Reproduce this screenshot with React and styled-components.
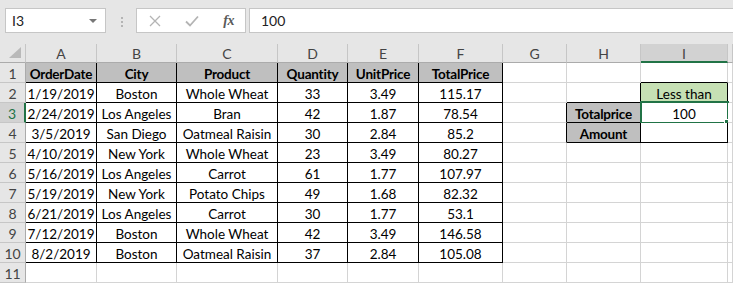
import React from "react";
import styled, { createGlobalStyle } from "styled-components";

const GlobalStyle = createGlobalStyle`
  html, body {
    margin: 0;
    padding: 0;
    background: #fff;
    overflow: hidden;
  }
  body {
    font-family: Lato, "Open Sans", sans-serif;
    color: #000;
  }
`;

const COLS = [71, 80, 101, 70, 71, 84, 64, 74, 87];
const LETTERS = ["A", "B", "C", "D", "E", "F", "G", "H", "I"];
const GRID = "#d4d4d4";
const GREEN = "#217346";

const table = [
  ["OrderDate", "City", "Product", "Quantity", "UnitPrice", "TotalPrice"],
  ["1/19/2019", "Boston", "Whole Wheat", "33", "3.49", "115.17"],
  ["2/24/2019", "Los Angeles", "Bran", "42", "1.87", "78.54"],
  ["3/5/2019", "San Diego", "Oatmeal Raisin", "30", "2.84", "85.2"],
  ["4/10/2019", "New York", "Whole Wheat", "23", "3.49", "80.27"],
  ["5/16/2019", "Los Angeles", "Carrot", "61", "1.77", "107.97"],
  ["5/19/2019", "New York", "Potato Chips", "49", "1.68", "82.32"],
  ["6/21/2019", "Los Angeles", "Carrot", "30", "1.77", "53.1"],
  ["7/12/2019", "Boston", "Whole Wheat", "42", "3.49", "146.58"],
  ["8/2/2019", "Boston", "Oatmeal Raisin", "37", "2.84", "105.08"],
];

// sheet[row][col], row 1..11, col 0..9 (9 = partial column J)
const buildSheet = () => {
  const sheet = [];
  for (let r = 1; r <= 11; r++) {
    const row = [];
    for (let c = 0; c < 10; c++) row.push({ text: "", boxed: false });
    sheet.push(row);
  }
  table.forEach((cells, i) => {
    cells.forEach((text, c) => {
      sheet[i][c] = { text, boxed: true, bold: i === 0, fill: i === 0 ? "#bfbfbf" : null };
    });
  });
  sheet[1][8] = { text: "Less than", boxed: true, fill: "#c6e0b4" };
  sheet[2][7] = { text: "Totalprice", boxed: true, bold: true, fill: "#bfbfbf" };
  sheet[2][8] = { text: "100", boxed: true, selected: true };
  sheet[3][7] = { text: "Amount", boxed: true, bold: true, fill: "#bfbfbf" };
  sheet[3][8] = { text: "", boxed: true };
  return sheet;
};

const sheet = buildSheet();
const boxed = (r, c) => !!(sheet[r] && sheet[r][c] && sheet[r][c].boxed);

const Toolbar = styled.div`
  height: 44px;
  background: #e6e6e6;
  display: flex;
  align-items: flex-start;
  padding: 8px 0 0 5px;
  box-sizing: border-box;
`;

const NameBox = styled.div`
  width: 101px;
  height: 25px;
  box-sizing: border-box;
  background: #fff;
  border: 1px solid #c6c6c6;
  display: flex;
  align-items: center;
  justify-content: space-between;
  padding: 0 8px 0 6px;
  font-size: 14px;
  color: #222;
`;

const Caret = styled.span`
  width: 0;
  height: 0;
  border-left: 4px solid transparent;
  border-right: 4px solid transparent;
  border-top: 4px solid #777;
`;

const Grip = styled.div`
  width: 2px;
  margin: 9px 13px 0 15px;
  display: flex;
  flex-direction: column;
  gap: 2px;
  span {
    width: 2px;
    height: 2px;
    background: #b4b4b4;
  }
`;

const FxBox = styled.div`
  width: 110px;
  height: 25px;
  box-sizing: border-box;
  background: #fff;
  border: 1px solid #c6c6c6;
  display: flex;
  align-items: center;
  padding: 0 11px 0 12px;
  margin-right: 3px;
`;

const IconSlot = styled.span`
  width: 36px;
  display: flex;
  align-items: center;
`;

const Fx = styled.span`
  font-family: "Liberation Serif", "DejaVu Serif", serif;
  font-style: italic;
  font-weight: 700;
  font-size: 14px;
  color: #5a5a5a;
  letter-spacing: -0.5px;
  margin-left: auto;
`;

const FormulaInput = styled.div`
  flex: 1;
  height: 25px;
  box-sizing: border-box;
  background: #fff;
  border: 1px solid #c6c6c6;
  border-right: none;
  display: flex;
  align-items: center;
  padding-left: 11px;
  font-size: 14px;
  color: #222;
`;

const Sheet = styled.div`
  display: grid;
  grid-template-columns: 26px ${COLS.map((w) => w + "px").join(" ")} 1fr;
  grid-template-rows: 19px repeat(11, 20px);
`;

const Corner = styled.div`
  background: #e6e6e6;
  border-right: 1px solid #c6c6c6;
  border-bottom: 1px solid #ababab;
  position: relative;
  &::after {
    content: "";
    position: absolute;
    right: 4px;
    bottom: 4px;
    border-left: 12px solid transparent;
    border-bottom: 11px solid #b9b9b9;
  }
`;

const ColHead = styled.div`
  background: ${(p) => (p.$active ? "#d2d2d2" : "#e6e6e6")};
  border-right: 1px solid #c6c6c6;
  border-bottom: ${(p) => (p.$active ? `2px solid ${GREEN}` : "1px solid #ababab")};
  display: flex;
  align-items: center;
  justify-content: center;
  font-size: 14px;
  color: #444;
  padding-top: 1px;
`;

const RowHead = styled.div`
  background: ${(p) => (p.$active ? "#d2d2d2" : "#e6e6e6")};
  border-right: ${(p) => (p.$active ? `2px solid ${GREEN}` : "1px solid #ababab")};
  border-bottom: 1px solid #c6c6c6;
  display: flex;
  align-items: center;
  justify-content: center;
  font-size: 14px;
  color: ${(p) => (p.$active ? GREEN : "#444")};
  padding-top: 1px;
  box-sizing: border-box;
`;

const Cell = styled.div`
  position: relative;
  background: ${(p) => p.$fill || "#fff"};
  border-right: 1px solid ${(p) => (p.$right ? "#000" : GRID)};
  border-bottom: 1px solid ${(p) => (p.$bottom ? "#000" : GRID)};
  display: flex;
  align-items: center;
  justify-content: center;
  font-size: 13.5px;
  font-weight: ${(p) => (p.$bold ? 700 : 400)};
  letter-spacing: ${(p) => (p.$bold ? "-0.2px" : "0")};
  white-space: nowrap;
  padding-top: 2px;
  box-sizing: border-box;
`;

const Selection = styled.div`
  position: absolute;
  top: -2px;
  left: -1px;
  right: -2px;
  bottom: -2px;
  border: 2px solid ${GREEN};
  pointer-events: none;
  &::after {
    content: "";
    position: absolute;
    right: -4px;
    bottom: -4px;
    width: 5px;
    height: 5px;
    background: ${GREEN};
    border: 1px solid #fff;
  }
`;

const CrossIcon = () => (
  <svg width="12" height="12" viewBox="0 0 12 12">
    <path d="M1 1L11 11M11 1L1 11" stroke="#b4b4b4" strokeWidth="1.3" fill="none" />
  </svg>
);

const CheckIcon = () => (
  <svg width="14" height="12" viewBox="0 0 14 12">
    <path d="M1 6.5L5 10.5L13 1.5" stroke="#b4b4b4" strokeWidth="1.8" fill="none" />
  </svg>
);

export default function App() {
  return (
    <>
      <GlobalStyle />
      <Toolbar>
        <NameBox>
          I3
          <Caret />
        </NameBox>
        <Grip>
          <span />
          <span />
          <span />
        </Grip>
        <FxBox>
          <IconSlot>
            <CrossIcon />
          </IconSlot>
          <IconSlot>
            <CheckIcon />
          </IconSlot>
          <Fx>fx</Fx>
        </FxBox>
        <FormulaInput>100</FormulaInput>
      </Toolbar>
      <Sheet>
        <Corner />
        {LETTERS.map((l) => (
          <ColHead key={l} $active={l === "I"}>
            {l}
          </ColHead>
        ))}
        <ColHead />
        {sheet.map((row, r) => (
          <React.Fragment key={r}>
            <RowHead $active={r === 2}>{r + 1}</RowHead>
            {row.map((cell, c) => (
              <Cell
                key={c}
                $fill={cell.fill}
                $bold={cell.bold}
                $right={boxed(r, c) || boxed(r, c + 1)}
                $bottom={boxed(r, c) || boxed(r + 1, c)}
              >
                {cell.text}
                {cell.selected && <Selection />}
              </Cell>
            ))}
          </React.Fragment>
        ))}
      </Sheet>
    </>
  );
}
